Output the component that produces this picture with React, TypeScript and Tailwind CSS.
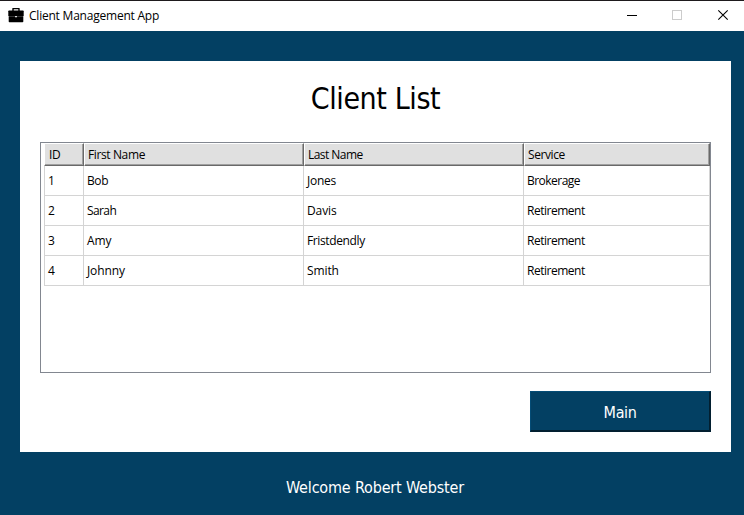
const columns = ['ID', 'First Name', 'Last Name', 'Service'];

const clients = [
  ['1', 'Bob', 'Jones', 'Brokerage'],
  ['2', 'Sarah', 'Davis', 'Retirement'],
  ['3', 'Amy', 'Fristdendly', 'Retirement'],
  ['4', 'Johnny', 'Smith', 'Retirement'],
];

const tracking: Record<string, string> = {
  ID: 'ml-px tracking-[-0.3px]',
  'First Name': 'tracking-[-0.38px]',
  'Last Name': 'tracking-[-0.55px]',
  Service: 'tracking-[-0.4px]',
  Brokerage: 'tracking-[-0.52px]',
  Retirement: 'tracking-[-0.48px]',
  Fristdendly: 'tracking-[-0.38px]',
  Sarah: 'tracking-[-0.6px]',
  Bob: 'tracking-[-0.4px]',
  Jones: 'tracking-[-0.25px]',
};

function Briefcase() {
  return (
    <svg width="16" height="15" viewBox="0 0 16 15">
      <path d="M5 3V.9q0-.4.4-.4h5.2q.4 0 .4.4V3" fill="none" stroke="#000" strokeWidth="1.4" />
      <path d="M1 2.5h14q.7 0 .7.7V8H.3V3.2q0-.7.7-.7z" fill="#000" />
      <path d="M.7 8h14.6v1H.7z" fill="#333" />
      <path d="M.7 9h14.6v4.6q0 .7-.7.7H1.4q-.7 0-.7-.7z" fill="#000" />
      <path d="M7 8h2v1.2H7z" fill="#ddd" />
    </svg>
  );
}

function TitleBar() {
  return (
    <header className="flex h-[31px] items-center border-t border-[#1e1a1d] bg-white">
      <div className="ml-2 flex h-4 w-4">
        <Briefcase />
      </div>
      <span className="ml-[5px] grow text-[12px] leading-4 tracking-[-0.22px] text-black">
        Client Management App
      </span>
      <div className="flex">
        <svg width="46" height="30" viewBox="0 0 46 30" shapeRendering="crispEdges">
          <path d="M18 14.5h10" stroke="#000" />
        </svg>
        <svg width="46" height="30" viewBox="0 0 46 30" shapeRendering="crispEdges">
          <rect x="17.5" y="9.5" width="9" height="9" fill="none" stroke="#ccc" />
        </svg>
        <svg width="43" height="30" viewBox="0 0 43 30">
          <path d="M17.3 9.3l9.4 9.4M26.7 9.3l-9.4 9.4" stroke="#000" strokeWidth="1.1" />
        </svg>
      </div>
    </header>
  );
}

function ClientTable() {
  return (
    <div className="mt-[23px] h-[231px] border border-[#828790] pl-[3px]">
      <div className="grid grid-cols-[40px_220px_220px_186px] text-[12px] text-black">
        {columns.map((name) => (
          <div
            key={name}
            className="h-[23px] border-t border-r border-b border-l border-t-white border-r-[#696969] border-b-[#696969] border-l-white"
          >
            <div className="h-full border-r border-b border-[#a0a0a0] bg-[#e0e0e0] pl-[3px] leading-[22px]">
              <span className={tracking[name]}>{name}</span>
            </div>
          </div>
        ))}
        {clients.flat().map((value, i) => (
          <div
            key={i}
            className="h-[30px] border-r border-b border-[#d4d4d4] pl-[3px] leading-[29px] [&:nth-child(4n+1)]:border-l"
          >
            <span className={tracking[value] ?? 'tracking-[-0.1px]'}>{value}</span>
          </div>
        ))}
      </div>
    </div>
  );
}

export default function App() {
  return (
    <div className="flex h-[515px] w-[744px] flex-col overflow-hidden bg-[#034063] font-['Open_Sans','Noto_Sans',sans-serif]">
      <TitleBar />
      <main className="mt-[30px] ml-5 flex h-[391px] w-[711px] flex-col bg-white px-5">
        <h1 className="mt-[18px] h-10 text-center font-['DejaVu_Sans_Condensed','DejaVu_Sans',sans-serif] text-[30px] leading-10 tracking-[-0.4px] text-black [font-stretch:condensed]">
          Client List
        </h1>
        <ClientTable />
        <button className="mt-[18px] h-[41px] w-[181px] self-end border-t border-r-2 border-b-2 border-l border-t-[#044c76] border-r-[#021f30] border-b-[#021f30] border-l-[#044c76] bg-[#034063] pt-[3px] font-['DejaVu_Sans_Condensed','DejaVu_Sans',sans-serif] text-[16px] tracking-[-0.4px] text-white [font-stretch:condensed]">
          Main
        </button>
      </main>
      <footer className="mt-6 ml-[6px] text-center font-['DejaVu_Sans_Condensed','DejaVu_Sans',sans-serif] text-[16px] leading-6 tracking-[-0.17px] text-white [font-stretch:condensed]">
        Welcome Robert Webster
      </footer>
    </div>
  );
}
